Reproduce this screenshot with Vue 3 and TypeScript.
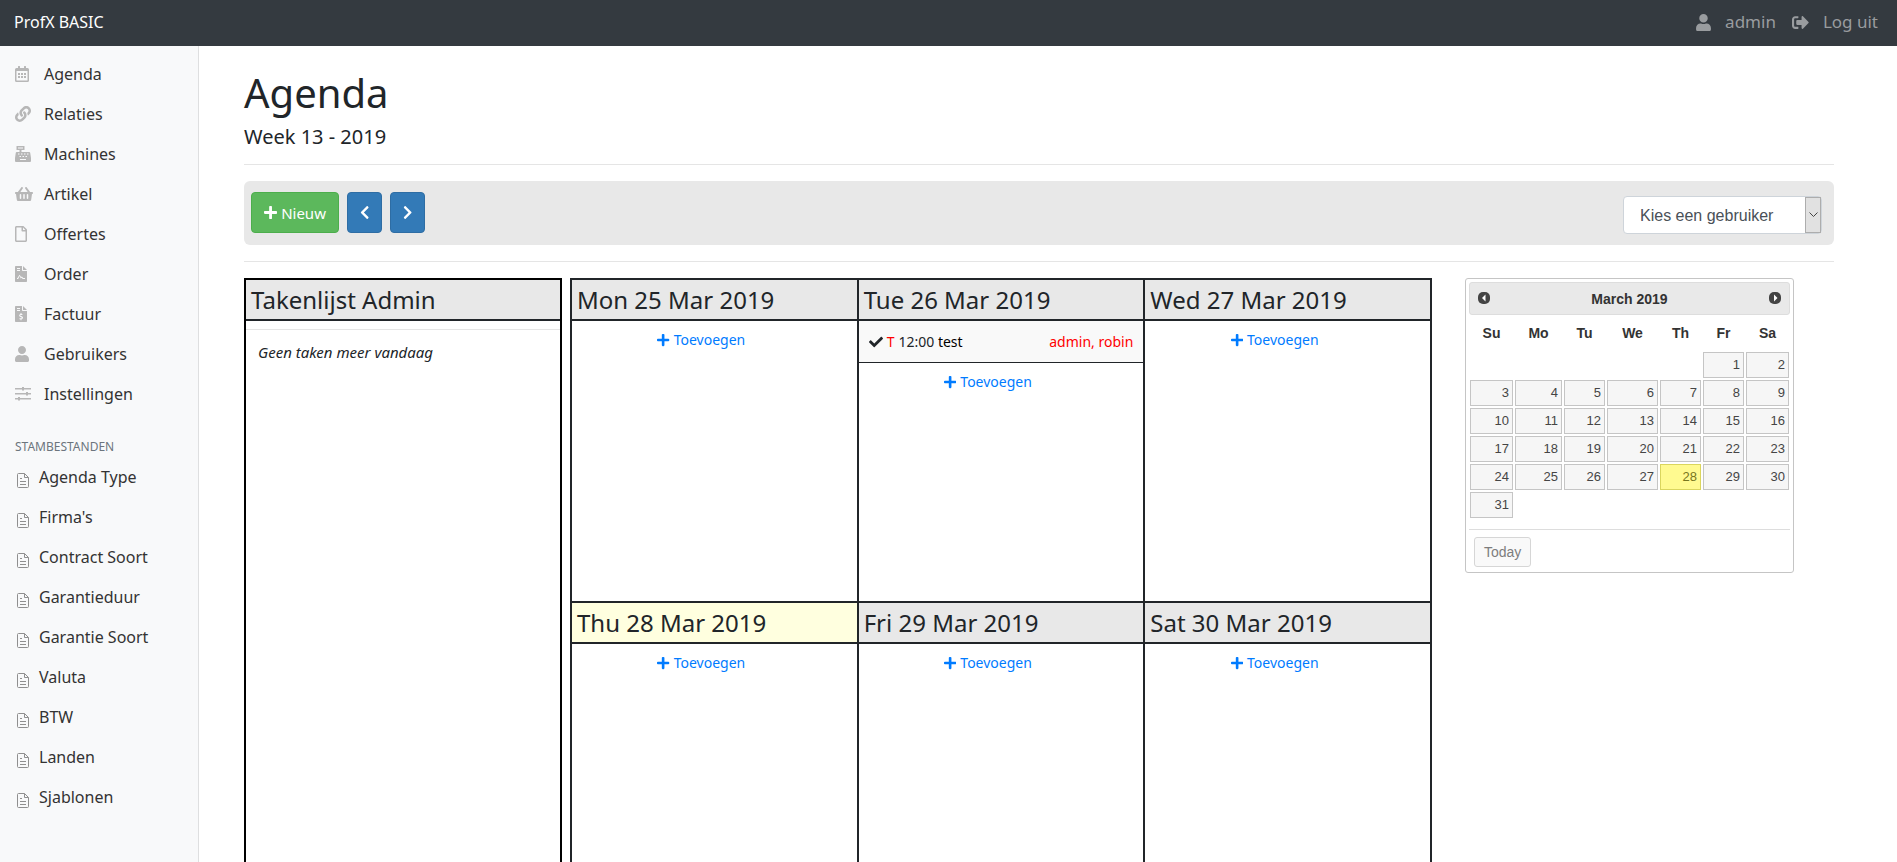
<script setup lang="ts">
import { ref } from 'vue'

interface Glyph {
  w: number
  h: number
  d: string
}

const calendarCells = [96, 192, 288].map((x) => [224, 320].map((y) => `M${x} ${y}h64v64h-64z`).join('')).join('')

const glyphs: Record<string, Glyph> = {
  calendar: { w: 448, h: 512, d: 'M48 64h48V12q0-12 12-12h40q12 0 12 12v52h128V12q0-12 12-12h40q12 0 12 12v52h48q48 0 48 48v352q0 48-48 48H48q-48 0-48-48V112q0-48 48-48zM48 160v304h352V160z' + calendarCells },
  link: { w: 512, h: 512, d: 'M326.612 185.391c59.747 59.809 58.927 155.698.36 214.59-.11.12-.24.25-.36.37l-67.2 67.2c-59.27 59.27-155.699 59.262-214.96 0-59.27-59.26-59.27-155.7 0-214.96l37.106-37.106c9.84-9.84 26.786-3.3 27.294 10.606.648 17.722 3.826 35.527 9.69 52.721 1.986 5.822.567 12.262-3.783 16.612l-13.087 13.087c-28.026 28.026-28.905 73.66-1.155 101.96 28.024 28.579 74.086 28.749 102.325.51l67.2-67.19c28.191-28.191 28.073-73.757 0-101.83-3.701-3.694-7.429-6.564-10.341-8.569a16.037 16.037 0 0 1-6.947-12.606c-.396-10.567 3.348-21.456 11.698-29.806l21.054-21.055c5.521-5.521 14.182-6.199 20.584-1.731a152.482 152.482 0 0 1 20.522 17.197zM467.547 44.449c-59.261-59.262-155.69-59.27-214.96 0l-67.2 67.2c-.12.12-.25.25-.36.37-58.566 58.892-59.387 154.781.36 214.59a152.454 152.454 0 0 0 20.521 17.196c6.402 4.468 15.064 3.789 20.584-1.731l21.054-21.055c8.35-8.35 12.094-19.239 11.698-29.806a16.037 16.037 0 0 0-6.947-12.606c-2.912-2.005-6.64-4.875-10.341-8.569-28.073-28.073-28.191-73.639 0-101.83l67.2-67.19c28.239-28.239 74.3-28.069 102.325.51 27.75 28.3 26.872 73.934-1.155 101.96l-13.087 13.087c-4.35 4.35-5.769 10.79-3.783 16.612 5.864 17.194 9.042 34.999 9.69 52.721.509 13.906 17.454 20.446 27.294 10.606l37.106-37.106c59.271-59.259 59.271-155.699.001-214.959z' },
  register: { w: 16, h: 16, d: 'M1.500 0h8v4h-3v2H14.200a1 1 0 0 1 1 .8L16 12v3a1 1 0 0 1-1 1H1a1 1 0 0 1-1-1v-3l.8-5.200a1 1 0 0 1 1-.8H4.500V4h-3zM3 1.500v1h5v-1zM3 7.500v1h1.500v-1zm3 0v1h1.500v-1zm3 0v1h1.500v-1zm3 0v1h1.500v-1zM4.500 10v1H6v-1zm3 0v1H9v-1zm3 0v1H12v-1zM5 13v1h6v-1z' },
  basket: { w: 576, h: 512, d: 'M576 216v16c0 13.255-10.745 24-24 24h-8l-26.113 182.788C514.509 462.435 494.257 480 470.37 480H105.63c-23.887 0-44.139-17.565-47.518-41.212L32 256h-8c-13.255 0-24-10.745-24-24v-16c0-13.255 10.745-24 24-24h67.341l106.78-146.821c10.395-14.292 30.407-17.453 44.701-7.058 14.293 10.395 17.453 30.408 7.058 44.701L170.477 192h235.046L326.12 82.821c-10.395-14.292-7.234-34.306 7.059-44.701 14.291-10.395 34.306-7.235 44.701 7.058L484.659 192H552c13.255 0 24 10.745 24 24zM312 392V280c0-13.255-10.745-24-24-24s-24 10.745-24 24v112c0 13.255 10.745 24 24 24s24-10.745 24-24zm112 0V280c0-13.255-10.745-24-24-24s-24 10.745-24 24v112c0 13.255 10.745 24 24 24s24-10.745 24-24zm-224 0V280c0-13.255-10.745-24-24-24s-24 10.745-24 24v112c0 13.255 10.745 24 24 24s24-10.745 24-24z' },
  file: { w: 384, h: 512, d: 'M369.9 97.900L286 14C277 5 264.800 0 252.100 0H48C21.500 0 0 21.500 0 48v416c0 26.500 21.500 48 48 48h288c26.500 0 48-21.500 48-48V131.900c0-12.700-5.100-25-14.100-34zM332.100 128H256V51.900l76.100 76.100zM48 464V48h160v104c0 13.300 10.700 24 24 24h104v288H48z' },
  contract: { w: 12, h: 16, d: 'M.75 0H7v4.250a.75.750 0 0 0 .75.750H12v10.250a.75.750 0 0 1-.75.750H.75a.75.750 0 0 1-.75-.75V.75A.75.750 0 0 1 .75 0zM8 0l4 4H8zM2 2v1h3V2zm0 2v1h3V4zm0 9h1.200l1.300-3 1.300 2.500.9-.7 1 1.200H10v-1H8.200l-1.300-1.500-.8.600L4.500 8.700 2.500 12H2z' },
  invoice: { w: 12, h: 16, d: 'M.75 0H7v4.250a.75.750 0 0 0 .75.750H12v10.250a.75.750 0 0 1-.75.750H.75a.75.750 0 0 1-.75-.75V.75A.75.750 0 0 1 .75 0zM8 0l4 4H8zM2 2v1h3V2zm0 2v1h3V4zm3.500 3v1C3.800 8.300 3.700 10.500 5.300 11l1.200.4c.5.300.3.800-.2.800H4.500v1h1v1h1v-1c1.900-.2 2.100-2.500.4-3L5.500 9.800c-.4-.2-.3-.8.2-.8h1.700V8h-.9V7z' },
  user: { w: 448, h: 512, d: 'M224 256c70.700 0 128-57.300 128-128S294.700 0 224 0 96 57.300 96 128s57.300 128 128 128zm89.600 32h-16.700c-22.200 10.200-46.900 16-72.900 16s-50.600-5.800-72.900-16h-16.700C60.200 288 0 348.200 0 422.400V464c0 26.500 21.500 48 48 48h352c26.500 0 48-21.500 48-48v-41.600c0-74.200-60.200-134.400-134.400-134.400z' },
  sliders: { w: 16, h: 16, d: 'M0 2h7V1h2v1h7v1.500H9v1H7v-1H0zM0 7h11V6h2v1h3v1.500h-3v1h-2v-1H0zM0 12h3v-1h2v1h11v1.500H5v1H3v-1H0z' },
  signout: { w: 512, h: 512, d: 'M497 273L329 441c-15 15-41 4.500-41-17v-96H152c-13.300 0-24-10.700-24-24v-96c0-13.300 10.700-24 24-24h136V88c0-21.400 25.900-32 41-17l168 168c9.300 9.400 9.300 24.600 0 34zM192 436v-40c0-6.600-5.400-12-12-12H96c-17.700 0-32-14.300-32-32V160c0-17.700 14.300-32 32-32h84c6.600 0 12-5.400 12-12V76c0-6.600-5.400-12-12-12H96c-53 0-96 43-96 96v192c0 53 43 96 96 96h84c6.600 0 12-5.400 12-12z' },
  plus: { w: 448, h: 512, d: 'M416 208H272V64c0-17.670-14.330-32-32-32h-32c-17.670 0-32 14.330-32 32v144H32c-17.670 0-32 14.330-32 32v32c0 17.670 14.330 32 32 32h144v144c0 17.670 14.330 32 32 32h32c17.670 0 32-14.330 32-32V304h144c17.670 0 32-14.330 32-32v-32c0-17.670-14.330-32-32-32z' },
  check: { w: 512, h: 512, d: 'M173.898 439.404l-166.400-166.400c-9.997-9.997-9.997-26.206 0-36.204l36.203-36.204c9.997-9.998 26.207-9.998 36.204 0L192 312.690 432.095 72.596c9.997-9.997 26.207-9.997 36.204 0l36.203 36.204c9.997 9.997 9.997 26.206 0 36.204l-294.400 294.401c-9.998 9.997-26.207 9.997-36.204-.001z' },
  left: { w: 320, h: 512, d: 'M34.520 239.030L228.870 44.690c9.370-9.370 24.570-9.370 33.940 0l22.670 22.670c9.360 9.360 9.370 24.520.040 33.900L131.490 256l154.020 154.750c9.340 9.380 9.320 24.540-.040 33.900l-22.670 22.670c-9.370 9.370-24.570 9.370-33.940 0L34.520 272.970c-9.370-9.370-9.370-24.570 0-33.940z' },
  right: { w: 320, h: 512, d: 'M285.476 272.971L91.132 467.314c-9.373 9.373-24.569 9.373-33.941 0l-22.667-22.667c-9.357-9.357-9.375-24.522-.040-33.901L188.505 256 34.484 101.255c-9.335-9.379-9.317-24.544.040-33.901l22.667-22.667c9.373-9.373 24.569-9.373 33.941 0L285.475 239.030c9.373 9.372 9.373 24.568.001 33.941z' },
}

const mainNav = [
  { label: 'Agenda', icon: 'calendar' },
  { label: 'Relaties', icon: 'link' },
  { label: 'Machines', icon: 'register' },
  { label: 'Artikel', icon: 'basket' },
  { label: 'Offertes', icon: 'file' },
  { label: 'Order', icon: 'contract' },
  { label: 'Factuur', icon: 'invoice' },
  { label: 'Gebruikers', icon: 'user' },
  { label: 'Instellingen', icon: 'sliders' },
]

const baseNav = ['Agenda Type', "Firma's", 'Contract Soort', 'Garantieduur', 'Garantie Soort', 'Valuta', 'BTW', 'Landen', 'Sjablonen']

interface Appointment {
  type: string
  time: string
  title: string
  users: string
}

interface Day {
  label: string
  today?: boolean
  items: Appointment[]
}

const days: Day[] = [
  { label: 'Mon 25 Mar 2019', items: [] },
  { label: 'Tue 26 Mar 2019', items: [{ type: 'T', time: '12:00', title: 'test', users: 'admin, robin' }] },
  { label: 'Wed 27 Mar 2019', items: [] },
  { label: 'Thu 28 Mar 2019', today: true, items: [] },
  { label: 'Fri 29 Mar 2019', items: [] },
  { label: 'Sat 30 Mar 2019', items: [] },
]

const weekdays = ['Su', 'Mo', 'Tu', 'We', 'Th', 'Fr', 'Sa']
const firstWeekday = 5
const weeks = Array.from({ length: 6 }, (_, w) =>
  Array.from({ length: 7 }, (_, d) => {
    const n = w * 7 + d - firstWeekday + 1
    return n >= 1 && n <= 31 ? n : 0
  }),
)

const user = ref('')
</script>

<template>
  <div class="page">
    <header class="topbar">
      <a class="brand" href="#">ProfX BASIC</a>
      <nav class="account">
        <a href="#">
          <svg class="icon user-icon" viewBox="0 0 448 512"><path :d="glyphs.user.d" /></svg>
          <span>admin</span>
        </a>
        <a href="#">
          <svg class="icon out-icon" viewBox="0 0 512 512"><path :d="glyphs.signout.d" /></svg>
          <span>Log uit</span>
        </a>
      </nav>
    </header>

    <div class="body">
      <aside class="sidebar">
        <ul class="nav">
          <li v-for="item in mainNav" :key="item.label">
            <a href="#">
              <span class="slot">
                <svg class="icon" :viewBox="`0 0 ${glyphs[item.icon].w} ${glyphs[item.icon].h}`">
                  <path fill-rule="evenodd" :d="glyphs[item.icon].d" />
                </svg>
              </span>
              {{ item.label }}
            </a>
          </li>
        </ul>
        <h6 class="nav-title">STAMBESTANDEN</h6>
        <ul class="nav base">
          <li v-for="label in baseNav" :key="label">
            <a href="#">
              <svg class="doc" viewBox="0 0 12 15" width="12" height="15">
                <path d="M1.500.5h6l4 4v9a1 1 0 0 1-1 1h-9a1 1 0 0 1-1-1v-12a1 1 0 0 1 1-1zM7.500.5v4h4M3 5.500h2M3 8.500h6M3 11.500h6" />
              </svg>
              {{ label }}
            </a>
          </li>
        </ul>
      </aside>

      <main class="content">
        <div class="heading">
          <h1>Agenda</h1>
          <h5>Week 13 - 2019</h5>
        </div>

        <div class="toolbar">
          <div class="buttons">
            <button class="btn new" type="button">
              <svg class="icon" viewBox="0 0 448 512"><path :d="glyphs.plus.d" /></svg>
              Nieuw
            </button>
            <button class="btn step" type="button" aria-label="Vorige week">
              <svg class="icon" viewBox="0 0 320 512"><path :d="glyphs.left.d" /></svg>
            </button>
            <button class="btn step" type="button" aria-label="Volgende week">
              <svg class="icon" viewBox="0 0 320 512"><path :d="glyphs.right.d" /></svg>
            </button>
          </div>
          <div class="picker">
            <select v-model="user" aria-label="Gebruiker">
              <option value="">Kies een gebruiker</option>
              <option value="admin">admin</option>
              <option value="robin">robin</option>
            </select>
            <span class="arrow">
              <svg viewBox="0 0 9 6" width="9" height="6"><path d="M.5.5l4 4 4-4" /></svg>
            </span>
          </div>
        </div>

        <div class="board">
          <section class="tasks">
            <h4>Takenlijst Admin</h4>
            <p>Geen taken meer vandaag</p>
          </section>

          <section class="week">
            <article v-for="day in days" :key="day.label" class="day">
              <h4 :class="{ today: day.today }">{{ day.label }}</h4>
              <div v-for="item in day.items" :key="item.title" class="appointment">
                <svg class="icon" viewBox="0 0 512 512"><path :d="glyphs.check.d" /></svg>
                <span class="type">{{ item.type }}</span>
                <span>{{ item.time }} <a href="#">{{ item.title }}</a></span>
                <span class="users">{{ item.users }}</span>
              </div>
              <div class="add">
                <a href="#">
                  <svg class="icon" viewBox="0 0 448 512"><path :d="glyphs.plus.d" /></svg>
                  Toevoegen
                </a>
              </div>
            </article>
          </section>

          <section class="calendar">
            <div class="cal-head">
              <button type="button" aria-label="Prev">
                <svg viewBox="0 0 12 12" width="12" height="12"><rect width="12" height="12" rx="5" /><path d="M7.500 2.500v7L4 6z" /></svg>
              </button>
              <strong>March 2019</strong>
              <button type="button" aria-label="Next">
                <svg viewBox="0 0 12 12" width="12" height="12"><rect width="12" height="12" rx="5" /><path d="M5 2.500v7L8.500 6z" /></svg>
              </button>
            </div>
            <table>
              <colgroup>
                <col v-for="name in weekdays" :key="name" :class="`col-${name.toLowerCase()}`" />
              </colgroup>
              <thead>
                <tr>
                  <th v-for="name in weekdays" :key="name" scope="col">{{ name }}</th>
                </tr>
              </thead>
              <tbody>
                <tr v-for="(row, i) in weeks" :key="i">
                  <td v-for="(n, j) in row" :key="j">
                    <a v-if="n" href="#" :class="{ current: n === 28 }">{{ n }}</a>
                  </td>
                </tr>
              </tbody>
            </table>
            <div class="cal-foot">
              <button type="button">Today</button>
            </div>
          </section>
        </div>
      </main>
    </div>
  </div>
</template>

<style>
html,
body {
  height: 100%;
  overflow: hidden;
}

#app {
  height: 100%;
}
</style>

<style scoped>
* {
  box-sizing: border-box;
}

.page {
  display: flex;
  flex-direction: column;
  height: 100%;
  background: #fff;
  color: #212529;
  font-family: 'Noto Sans', sans-serif;
  font-size: 16px;
  line-height: 24px;
}

a {
  color: inherit;
  text-decoration: none;
}

h1,
h4,
h5,
h6,
p,
ul {
  margin: 0;
  padding: 0;
  font-weight: 400;
}

.icon {
  flex: none;
  height: 1em;
  fill: currentColor;
}

.topbar {
  display: flex;
  flex: none;
  align-items: center;
  justify-content: space-between;
  height: 46px;
  padding: 0 19px 2px 14px;
  background: #343a40;
}

.brand {
  color: #fff;
}

.account {
  display: flex;
  gap: 16px;
  color: #999c9f;
  font-size: 17px;
}

.account a {
  display: flex;
  align-items: center;
  gap: 14px;
}

.user-icon {
  width: 15px;
}

.out-icon {
  width: 17px;
}

.body {
  display: flex;
  flex: 1;
  min-height: 0;
}

.sidebar {
  flex: none;
  width: 199px;
  padding-top: 8px;
  border-right: 1px solid #dedfe0;
  background: #f8f9fa;
  color: #333;
}

.nav {
  list-style: none;
}

.nav a {
  display: flex;
  align-items: center;
  height: 40px;
  padding-left: 15px;
}

.slot {
  display: flex;
  width: 29px;
  color: #b7b7b7;
}

.nav-title {
  padding: 25px 15px 2px;
  color: #6c757d;
  font-size: 12px;
  line-height: 16px;
}

.nav.base a {
  gap: 10px;
  padding-left: 17px;
}

.doc {
  margin-top: 6px;
  fill: none;
  stroke: #8f8f8f;
}

.content {
  flex: 1;
  min-width: 0;
  padding: 23px 63px 0 45px;
  overflow: hidden;
}

.heading {
  padding-bottom: 15px;
  border-bottom: 1px solid #e5e5e5;
}

h1 {
  font-size: 40px;
  line-height: 48px;
}

h5 {
  margin-top: 8px;
  font-size: 20px;
  line-height: 24px;
}

.toolbar {
  display: flex;
  justify-content: space-between;
  height: 64px;
  margin: 16px 0;
  padding: 11px 12px 0 7px;
  border-radius: 6px;
  background: #e8e8e8;
}

.buttons {
  display: flex;
  gap: 8px;
}

.btn {
  display: flex;
  align-items: center;
  justify-content: center;
  gap: 4px;
  height: 41px;
  padding: 0 12px;
  border: 1px solid #2e6da4;
  border-radius: 4px;
  background: #337ab7;
  color: #fff;
  font: 15px 'Noto Sans', sans-serif;
}

.btn.new {
  border-color: #4cae4c;
  background: #5cb85c;
}

.btn.step {
  width: 35px;
}

.picker {
  position: relative;
  width: 199px;
  height: 38px;
  margin-top: 4px;
}

.picker select {
  width: 100%;
  height: 100%;
  padding: 0 16px;
  border: 1px solid #ced4da;
  border-radius: 4px;
  appearance: none;
  background: #fff;
  color: #495057;
  font: 16px 'Liberation Sans', sans-serif;
}

.arrow {
  position: absolute;
  inset: 1px 1px 1px auto;
  display: flex;
  align-items: center;
  justify-content: center;
  width: 16px;
  border: 1px solid #adadad;
  background: #e1e1e1;
  pointer-events: none;
}

.arrow svg {
  fill: none;
  stroke: #444;
}

.board {
  display: flex;
  align-items: flex-start;
  padding-top: 16px;
  border-top: 1px solid #e5e5e5;
}

h4 {
  height: 41px;
  padding: 5px 5px 0;
  border-bottom: 2px solid #212529;
  background: #e8e8e8;
  font-size: 24px;
  line-height: 29px;
}

h4.today {
  background: #ffffdf;
}

.tasks {
  align-self: stretch;
  width: 20%;
  margin-right: 8px;
  border: 2px solid #000;
}

.tasks p {
  margin-top: 8px;
  padding: 12px;
  border-top: 1px solid #e5e5e5;
  font-size: 15px;
  font-style: italic;
  line-height: 21px;
}

.week {
  display: grid;
  flex: 1;
  grid-template-columns: repeat(3, 1fr);
  grid-auto-rows: 323px;
  border: 1px solid #212529;
}

.day {
  margin: -1px;
  border: 2px solid #212529;
  font-size: 14px;
  line-height: 21px;
}

.appointment {
  display: flex;
  align-items: center;
  gap: 4px;
  height: 42px;
  padding: 0 10px;
  border-bottom: 1px solid #212529;
  background: #f9f9f9;
}

.appointment a {
  color: #000;
}

.type,
.users {
  color: #f00;
}

.users {
  margin-left: auto;
}

.add {
  display: flex;
  justify-content: center;
  padding: 8px 26px 0 0;
}

.add a {
  display: flex;
  align-items: center;
  gap: 4px;
  color: #007bff;
}

.calendar {
  flex: none;
  width: 329px;
  margin: 0 40px 0 33px;
  padding: 3px;
  border: 1px solid #c5c5c5;
  border-radius: 3px;
  color: #333;
  font-family: 'Liberation Sans', sans-serif;
  font-size: 14px;
}

.cal-head {
  display: flex;
  align-items: center;
  justify-content: space-between;
  height: 33px;
  padding: 0 8px;
  border: 1px solid #ddd;
  border-radius: 3px;
  background: #e9e9e9;
}

.cal-head button {
  display: flex;
  padding: 0 0 2px;
  border: 0;
  background: none;
}

.cal-head rect {
  fill: #444;
}

.cal-head path {
  fill: #fff;
}

table {
  width: 100%;
  border-collapse: collapse;
  table-layout: fixed;
}

.col-su,
.col-sa {
  width: 45px;
}

.col-mo {
  width: 49px;
}

.col-we {
  width: 53px;
}

th {
  height: 36px;
  padding: 0;
}

td {
  height: 28px;
  padding: 1px;
}

td a {
  display: block;
  height: 26px;
  padding: 0 3px;
  border: 1px solid #c5c5c5;
  background: #f6f6f6;
  color: #454545;
  font-size: 13px;
  line-height: 24px;
  text-align: right;
}

td a.current {
  border-color: #dad55e;
  background: #fffa90;
  color: #777620;
}

.cal-foot {
  margin-top: 10px;
  padding: 7px 5px 2px;
  border-top: 1px solid #ddd;
}

.cal-foot button {
  height: 30px;
  padding: 0 9px;
  border: 1px solid #d6d6d6;
  border-radius: 3px;
  background: #f9f9f9;
  color: #7d7d7d;
  font: 14px 'Liberation Sans', sans-serif;
}
</style>
